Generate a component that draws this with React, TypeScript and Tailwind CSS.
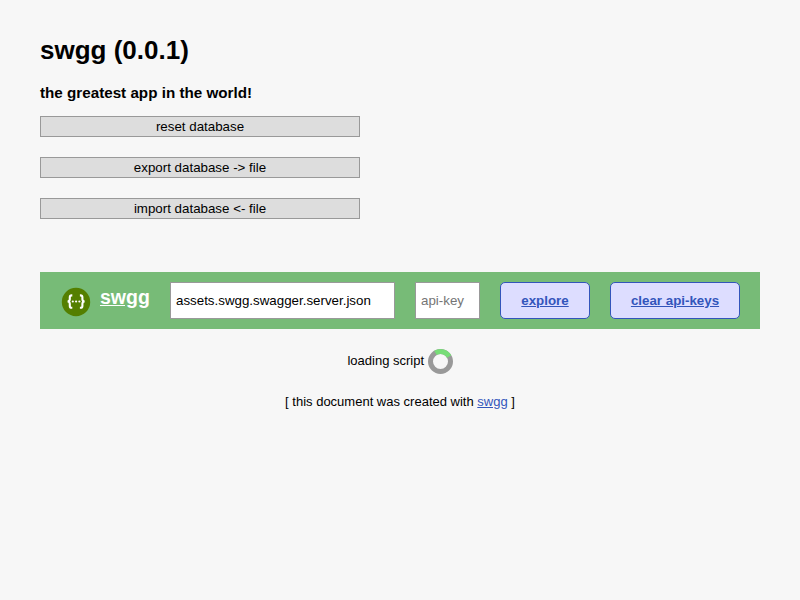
const dbActions = ["reset database", "export database -> file", "import database <- file"];

function SwaggerLogo() {
  return (
    <svg className="mt-[3px] ml-px size-[30px] shrink-0" viewBox="0 0 30 30" fill="none">
      <circle cx="15" cy="15" r="14.2" fill="#547f00" />
      <path
        d="M11.300 8.400h-.6c-1.300 0-1.900.7-1.900 1.900v2c0 1.300-.6 2-2.100 2.200c1.500.2 2.100.9 2.100 2.200v2.200c0 1.200.6 1.900 1.900 1.900h.6M18.900 8.400h.6c1.300 0 1.900.7 1.900 1.900v2c0 1.300.6 2 2.100 2.200c-1.500.2-2.100.9-2.100 2.200v2.200c0 1.200-.6 1.900-1.900 1.900h-.6"
        stroke="#fff"
        strokeWidth="2.1"
      />
      <g fill="#fff">
        <circle cx="11.800" cy="14.500" r="1.100" />
        <circle cx="15.100" cy="14.500" r="1.100" />
        <circle cx="18.400" cy="14.500" r="1.100" />
      </g>
    </svg>
  );
}

function Spinner() {
  return (
    <svg className="ml-[3px] size-[27px]" viewBox="0 0 27 27" fill="none" strokeWidth="5">
      <circle cx="13.500" cy="13.500" r="10" stroke="#999" />
      <path d="M8.500 4.840A10 10 0 0 1 22.160 8.500" stroke="#77dd77" />
    </svg>
  );
}

export default function App() {
  return (
    <div className="min-h-screen bg-[#f7f7f7] px-10 pt-[35px] font-['Liberation_Sans',Arial,sans-serif] text-[13px] leading-[15px] text-black">
      <h1 className="text-[26px] leading-[30px] font-bold">swgg (0.0.1)</h1>
      <h3 className="mt-[19px] text-[15.210px] leading-[17px] font-bold">the greatest app in the world!</h3>
      <div className="mt-[15px] flex w-80 flex-col gap-5">
        {dbActions.map((label) => (
          <button key={label} className="h-[21px] border border-[#999] bg-[#ddd] text-[13.333px] leading-[15px]">
            {label}
          </button>
        ))}
      </div>
      <div className="mt-[53px] flex h-[57px] items-center bg-[#77bb77] px-5">
        <SwaggerLogo />
        <a className="mb-[7px] ml-[9px] w-[50px] text-[19.500px] leading-[22px] font-bold text-white underline">swgg</a>
        <input
          className="ml-5 h-[37px] w-[225px] border border-[#999] bg-white px-[5px] text-[13.333px]"
          defaultValue="assets.swgg.swagger.server.json"
        />
        <input
          className="ml-5 h-[37px] w-[65px] border border-[#999] bg-white px-[5px] text-[13.333px] placeholder:text-[#757575]"
          placeholder="api-key"
        />
        <button className="ml-5 h-[37px] w-[90px] rounded-[5px] border border-[#3355bb] bg-[#ddddff] text-[13.333px] font-bold text-[#3355bb] underline">
          explore
        </button>
        <button className="ml-5 h-[37px] w-[130px] rounded-[5px] border border-[#3355bb] bg-[#ddddff] text-[13.333px] font-bold text-[#3355bb] underline">
          clear api-keys
        </button>
      </div>
      <div className="mt-[19px] flex h-[27px] items-center justify-center pl-[1.5px]">
        <span className="mb-[2px]">loading script</span>
        <Spinner />
      </div>
      <p className="mt-[19px] text-center">
        [ this document was created with <a className="text-[#3355bb] underline">swgg</a> ]
      </p>
    </div>
  );
}
